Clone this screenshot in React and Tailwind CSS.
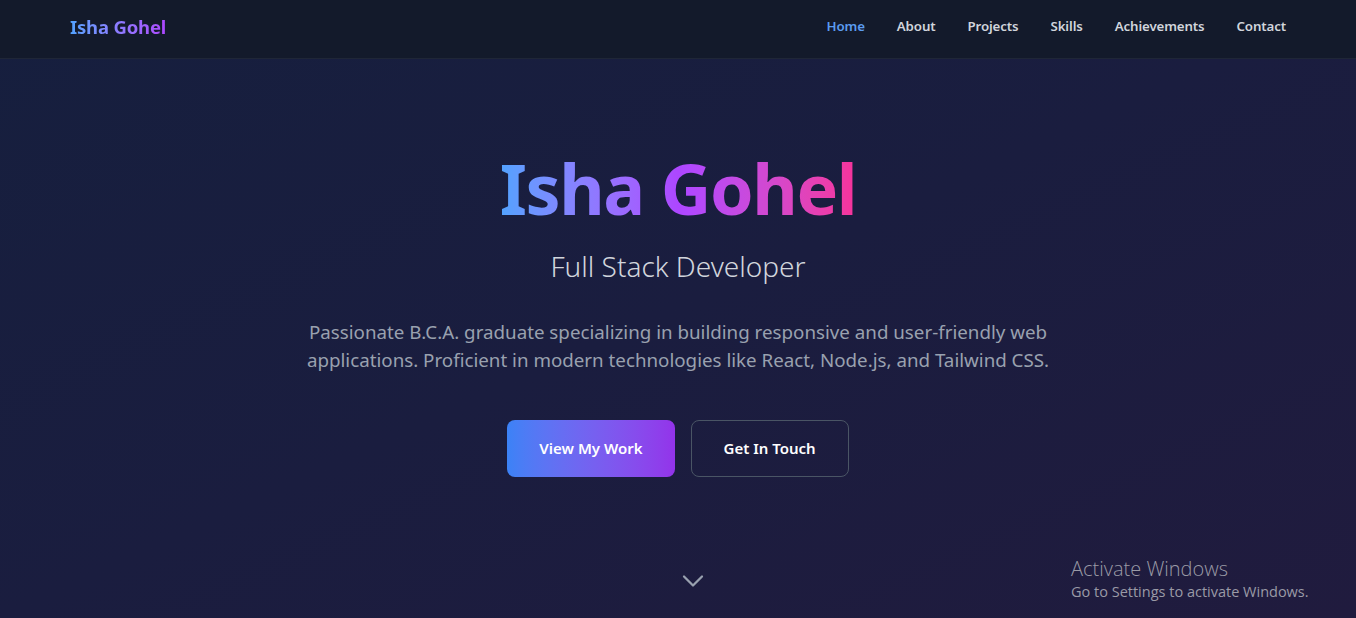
import React from "react";
import { ChevronDown } from "lucide-react";

const font = { fontFamily: '"Noto Sans", "Open Sans", sans-serif' };

export default function App() {
  const links = ["Home", "About", "Projects", "Skills", "Achievements", "Contact"];
  return (
    <div
      style={font}
      className="relative w-full h-[618px] overflow-hidden bg-gradient-to-br from-[#161f3e] via-[#1a1d3f] to-[#201b3e] text-white"
    >
      <nav className="h-[59px] bg-[#131a2b] border-b border-[#1f2637]">
        <div className="max-w-7xl mx-auto px-8 pb-[5px] h-full flex items-center justify-between">
          <div className="text-[18.5px] font-bold tracking-[-0.01em] bg-gradient-to-r from-blue-400 to-purple-500 bg-clip-text text-transparent">
            Isha Gohel
          </div>
          <div className="flex items-center gap-8">
            {links.map((l, i) => (
              <span
                key={l}
                className={`text-[13.3px] font-semibold tracking-[-0.01em] ${i === 0 ? "text-[#5b9cf0]" : "text-gray-300"}`}
              >
                {l}
              </span>
            ))}
          </div>
        </div>
      </nav>

      <section className="flex flex-col items-center text-center pt-[94px]">
        <h1 className="text-[70px] font-bold leading-none tracking-[-0.02em] pb-2 bg-gradient-to-r from-blue-400 via-purple-500 to-pink-500 bg-clip-text text-transparent">
          Isha Gohel
        </h1>
        <p className="mt-[17px] text-[28px] leading-9 font-light text-gray-300">Full Stack Developer</p>
        <p className="mt-[34px] max-w-3xl text-[18.75px] leading-7 text-gray-400">
          Passionate B.C.A. graduate specializing in building responsive and user-friendly web
          applications. Proficient in modern technologies like React, Node.js, and Tailwind CSS.
        </p>
        <div className="mt-[46px] flex gap-4">
          <button className="px-8 py-4 rounded-lg bg-gradient-to-r from-[#3b82f6] to-[#9333ea] text-[15px] leading-[25px] font-semibold text-white">
            View My Work
          </button>
          <button className="px-8 py-4 rounded-lg border border-gray-600 text-[15px] leading-[23px] font-semibold text-white">
            Get In Touch
          </button>
        </div>
        <ChevronDown className="mt-[86px] ml-[30px] text-gray-400" size={36} strokeWidth={1.5} />
      </section>

      <div
        className="absolute left-[1071px] top-[556px] text-[#9a9aa6]"
        style={{ fontFamily: '"Open Sans", "Noto Sans", sans-serif' }}
      >
        <div className="text-[20px] font-light leading-[26px]">Activate Windows</div>
        <div className="text-[14.5px] leading-[20px]">Go to Settings to activate Windows.</div>
      </div>
    </div>
  );
}
